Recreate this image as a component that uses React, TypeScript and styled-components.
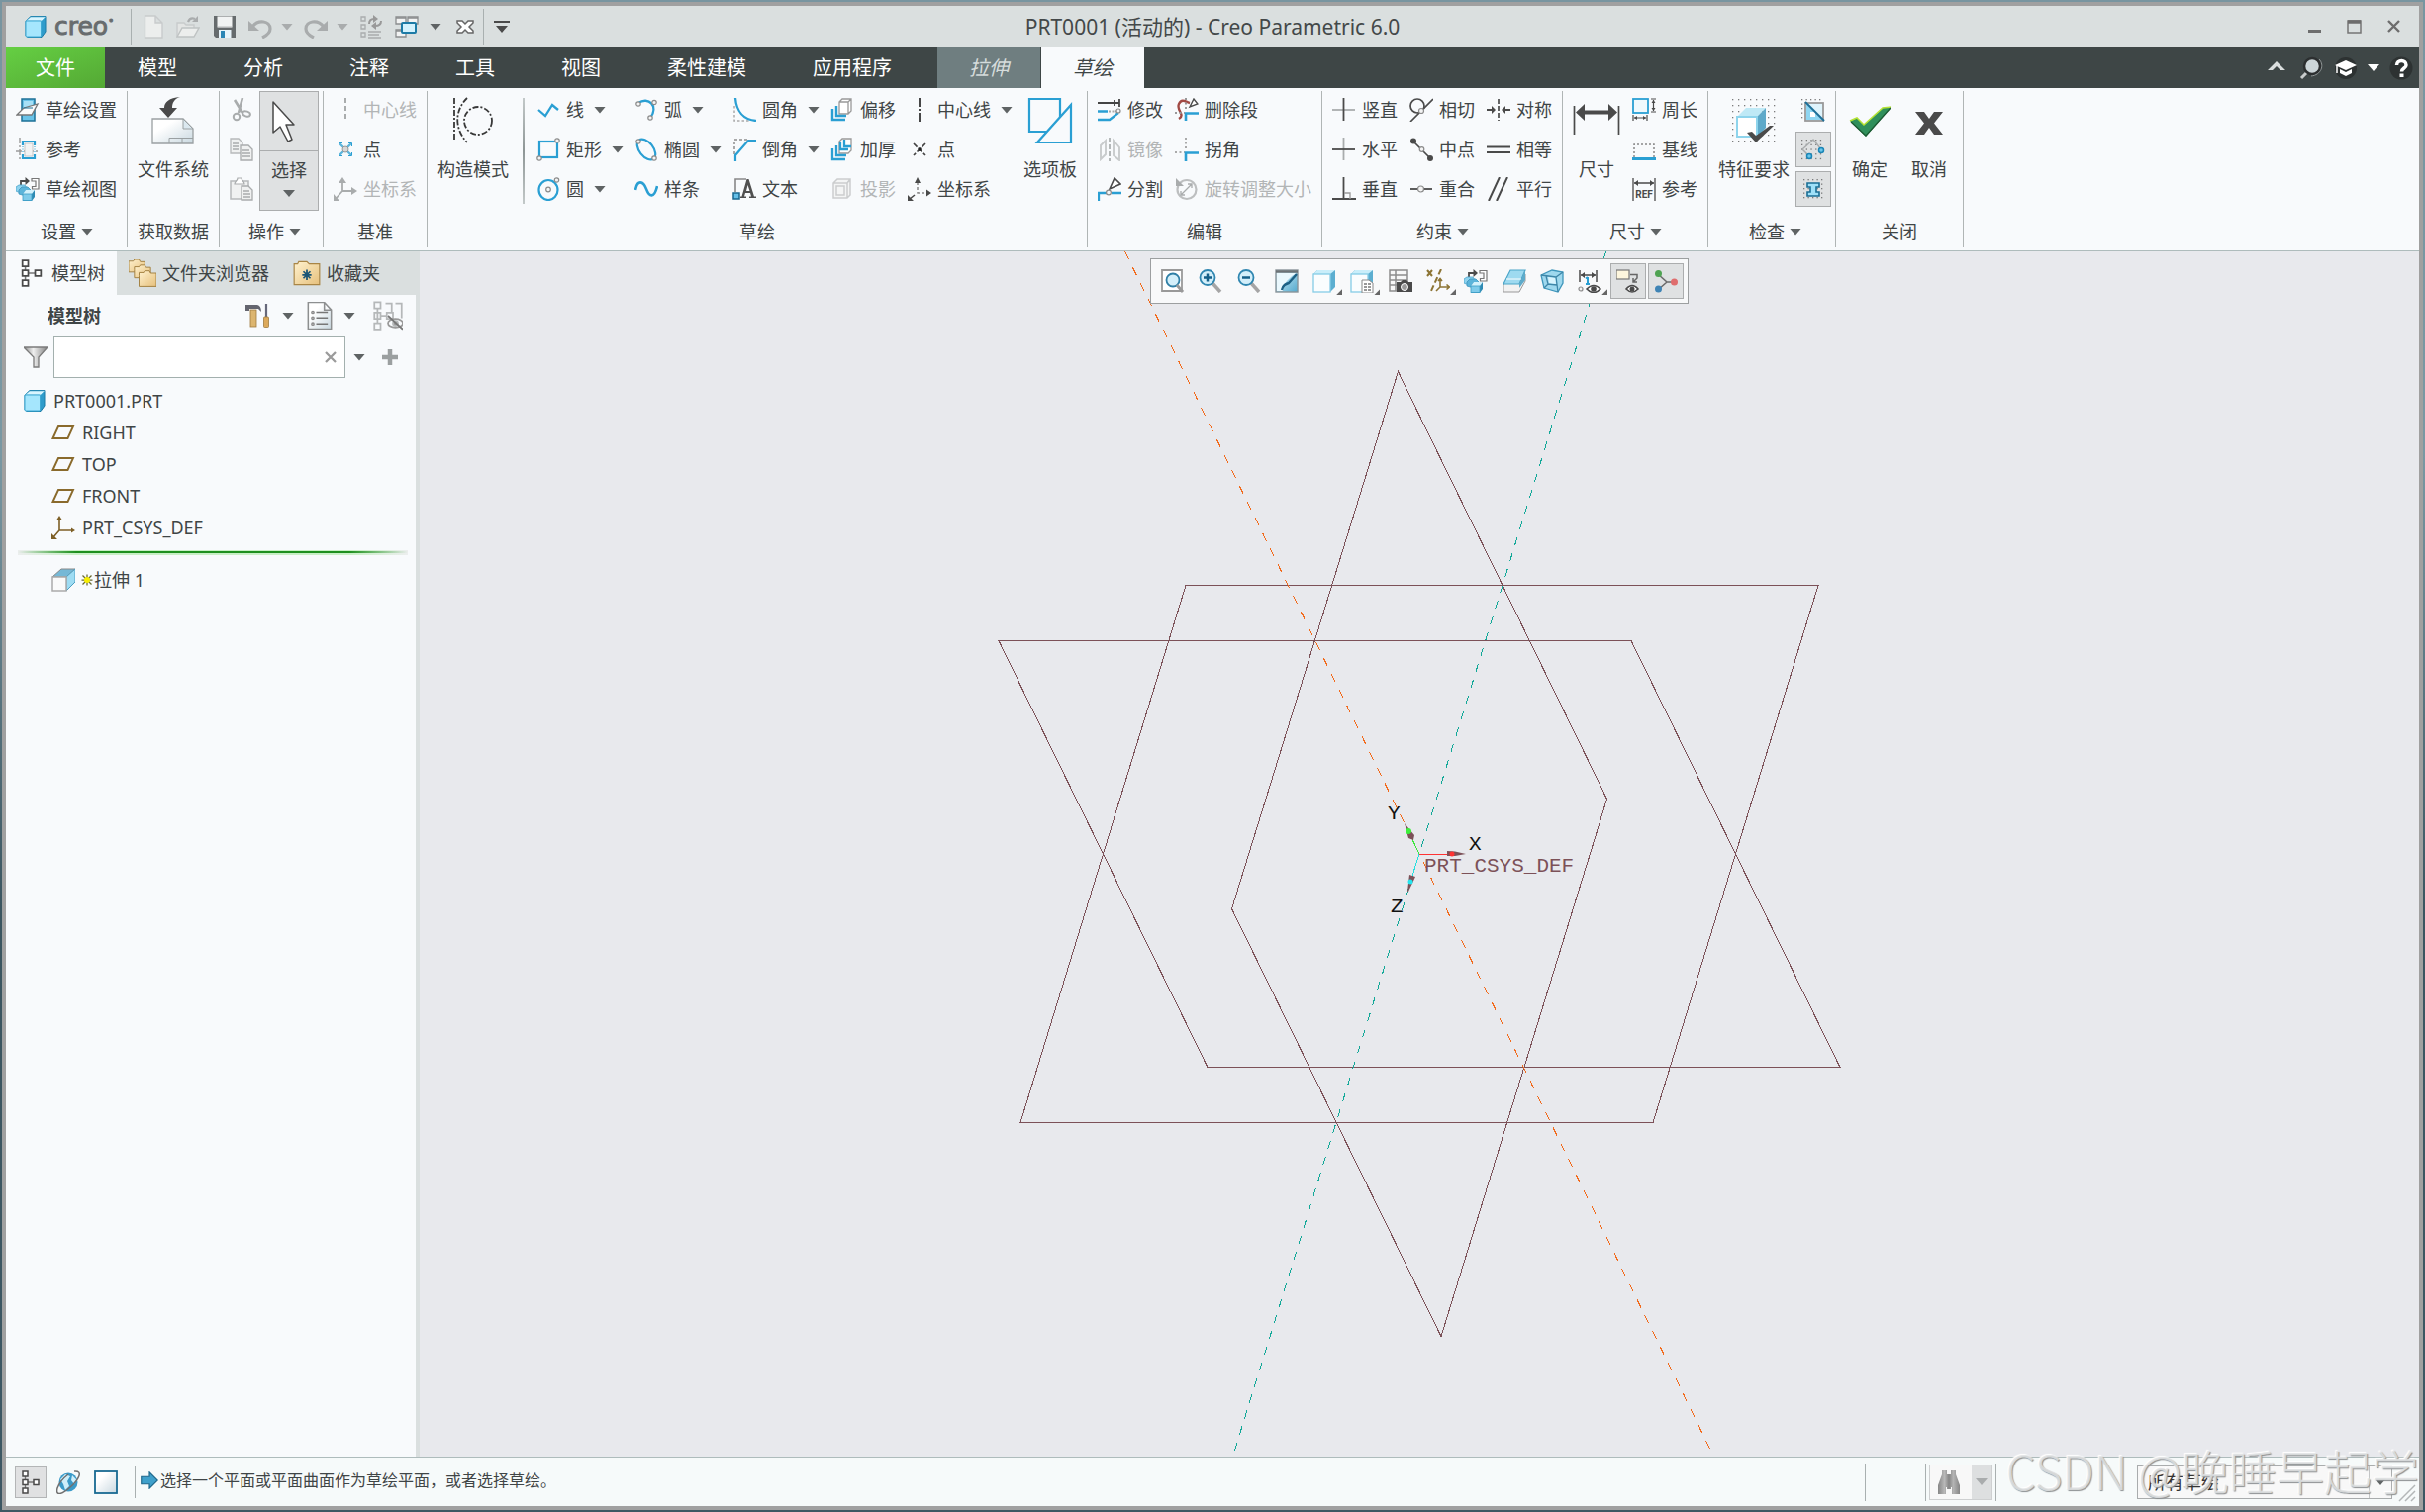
import React, { ReactNode } from 'react';
import styled, { createGlobalStyle, css } from 'styled-components';

const GlobalStyle = createGlobalStyle`
  *, *::before, *::after { box-sizing: border-box; }
  html, body, #root { height: 100%; }
  body {
    margin: 0;
    overflow: hidden;
    color: #3f4546;
    font-family: 'Noto Sans', 'Noto Sans CJK SC', sans-serif;
    font-size: 18px;
    line-height: 24px;
  }
  button, input, select { font: inherit; color: inherit; }
  svg { display: block; flex: none; }
`;

/* ---------- icons ---------- */

const B = '#2a9fd3';
const K = '#4a4a4a';
const G = '#a9acad';
const L = '#c8cbcc';

const node = (x: number, y: number, r = 2) => (
  <circle key={`${x}-${y}`} cx={x} cy={y} r={r} fill="#f4f4f4" stroke="#8b8b8b" strokeWidth="1.2" />
);

const dots = (x0: number, y0: number, nx: number, ny: number, step: number) => {
  const out: ReactNode[] = [];
  for (let i = 0; i < nx; i++)
    for (let j = 0; j < ny; j++)
      out.push(<rect key={`${i}.${j}`} x={x0 + i * step} y={y0 + j * step} width="1.3" height="1.3" fill="#7b7b7b" />);
  return out;
};

const viewBoxes: Record<string, number> = {
  fileSystem: 48, cursor: 48, construct: 48, palette: 48, dimension: 48, feature: 48, ok: 48, cancel: 48,
};

const partCube = (
  <>
    <path d="M2 6 L7 1.5 H22 V17 L18 22.5 H4 L2 21Z" fill="#2f9ccb" stroke="#1b7aa5" strokeWidth="1" />
    <path d="M2 6 L7 2 H22 L18 6Z" fill="#d9f5ff" stroke="#48a8cc" strokeWidth=".6" />
    <rect x="2" y="6" width="15.5" height="16" rx="1" fill="#a5e6fd" stroke="#3ea9d4" strokeWidth="1" />
  </>
);

const glyphs: Record<string, ReactNode> = {
  part: partCube,
  newDoc: <path d="M3.500 1 H14 L21 8 V23 H3.500Z M14 1 V8 H21" fill="#eceeed" stroke={L} strokeWidth="1.400" />,
  open: (
    <>
      <path d="M1 22 V8 H8 L10 10 H18 V13" fill="#e3e5e4" stroke={L} strokeWidth="1.400" />
      <path d="M1 22 L6 13 H23 L18 22Z" fill="#eceeed" stroke="#bfc3c3" strokeWidth="1.400" />
      <path d="M12 7 Q14 2 19 4" fill="none" stroke={G} strokeWidth="2.200" />
      <path d="M16 7 L22 7 L22 1Z" fill={G} />
    </>
  ),
  save: (
    <>
      <path d="M1 1 H23 V23 H3 L1 21Z" fill="#666b6d" />
      <rect x="4.500" y="1.500" width="15" height="11" fill="#f1f3f3" />
      <path d="M5 12 H19" stroke="#b5b8b9" />
      <rect x="6" y="15" width="12.500" height="8" fill="#e8f4fa" />
      <rect x="8" y="16" width="4" height="7" fill="#2c86b5" />
    </>
  ),
  undo: (
    <>
      <path d="M4 12 C10 4 22 6 22 14 C22 18 18 21 14 23" fill="none" stroke={G} strokeWidth="3.200" />
      <path d="M0 6 V16 H11Z" fill={G} />
    </>
  ),
  redo: (
    <>
      <path d="M20 12 C14 4 2 6 2 14 C2 18 6 21 10 23" fill="none" stroke={G} strokeWidth="3.200" />
      <path d="M24 6 V16 H13Z" fill={G} />
    </>
  ),
  regen: (
    <>
      <path d="M2 2 h4 v4 h-4z M2 10 h4 v4 h-4z M2 18 h4 v4 h-4z" fill="none" stroke={G} strokeWidth="1.300" />
      <path d="M9 17 H22 M9 20 H20 M9 23 H22" stroke={G} strokeWidth="1.300" />
      <path d="M10 9 C10 5 12 4 15 4 M22 6 C22 10 20 11 16 11" fill="none" stroke="#999" strokeWidth="2" />
      <path d="M14 0 L19 4 L14 8Z M17 7 L12 11 L17 15Z" fill="#999" />
    </>
  ),
  windows: (
    <>
      <path d="M1 2 H11 V9 H1Z M13 2 H23 V9 H13Z M1 15 H11 V22 H1Z" fill="#f2f3f3" stroke="#8a8d8e" strokeWidth="1.300" />
      <path d="M1 3 H11 M13 3 H23 M1 16 H11" stroke="#8a8d8e" strokeWidth="1.500" />
      <rect x="7" y="8" width="14" height="10" rx="1" fill="#d4f2fd" stroke="#1d7ba6" strokeWidth="2" />
    </>
  ),
  closeWin: (
    <path d="M4 6 H9 L12 9 L15 6 H20 V8 L16 12 L20 16 V18 H15 L12 15 L9 18 H4 V16 L8 12 L4 8Z" fill="#fff" stroke="#666" strokeWidth="1.500" />
  ),
  customize: <path d="M4 6 H20 V8 H4Z M6 11 H18 L12 18Z" fill={K} />,

  sketchSetup: (
    <>
      <rect x="6" y="1" width="13" height="22" fill="#6ac3e8" stroke="#1d7096" strokeWidth="1.500" />
      <rect x="8" y="3" width="9" height="8" fill="#a8e0f6" />
      <path d="M1 17 L8 10 L22 6 L16 17Z" fill="#fbfbfb" stroke="#777" strokeWidth="1.300" />
      <path d="M8 10 H17" stroke="#1d7096" />
    </>
  ),
  references: (
    <>
      <path d="M4 0 V24 M0 14 H24" stroke="#9a9a9a" strokeWidth="1.400" strokeDasharray="6 2 2 2" />
      <path d="M7 8 V4 H19 V8 M7 17 V21 H19 V17" fill="none" stroke={B} strokeWidth="2.200" />
      <path d="M9 6 H17 V19 H9Z" fill="#f3f3f3" stroke="#bbb" strokeWidth=".8" />
      <path d="M7 9 V16 M19 9 V16" stroke={B} strokeWidth="1" strokeDasharray="1 1.500" />
    </>
  ),
  sketchView: (
    <>
      <path d="M5 8 V4 H12" fill="none" stroke={K} strokeWidth="1.800" />
      <path d="M9.500 0 L14 4 L9.500 8Z" fill={K} />
      <path d="M16 1.500 H23 V12 H16.500 V9.500 H20 V4 H16Z" fill="#fff" stroke="#777" strokeWidth="1.200" />
      <path d="M0 10 L3 8 H9 L12 12 L7 17 L0 14Z" fill="#8ed2ee" stroke="#4aa5cb" strokeWidth=".8" />
      <path d="M3 13 L6 10 H12 L16 14 L10 19 L3 17Z" fill="#5cb4da" stroke="#3a94bc" strokeWidth=".8" />
      <path d="M7 17 L10 13 H19 V20 L16 24 H7Z" fill="#2e8ab3" />
      <path d="M7 17 L10 13 H19 L16 17Z" fill="#d2f1fc" />
      <rect x="7" y="17" width="9" height="6.500" fill="#7fcbea" stroke="#3c9dc6" strokeWidth=".8" />
    </>
  ),
  fileSystem: (
    <>
      <path d="M3 22 H34 L44 32 V47 H3Z" fill="url(#paper)" stroke="#9aa0a2" strokeWidth="1.300" />
      <path d="M34 22 V32 H44Z" fill="#dbe8ef" stroke="#9aa0a2" />
      <path d="M20 41.500 H44 M20 41.500 V47 M33 41.500 V47" stroke="#9aa0a2" fill="none" />
      <path d="M31 0 C20 1 15 5 15 11 H10 L19 21 L28 11 H23 C23 6 25 2 31 0Z" fill={K} />
    </>
  ),
  cut: (
    <>
      <path d="M5 2 L13 15 M13 0 L9 15" stroke={G} strokeWidth="2.600" />
      <circle cx="7" cy="19" r="3.200" fill="none" stroke={G} strokeWidth="2" />
      <ellipse cx="17" cy="16" rx="4" ry="2.500" transform="rotate(20 17 16)" fill="none" stroke={G} strokeWidth="2" />
    </>
  ),
  copy: (
    <>
      <path d="M1 1 H9 L13 5 V16 H1Z" fill="#f0f1f1" stroke="#b6b9ba" strokeWidth="1.300" />
      <path d="M3 6 H9 M3 9 H9 M3 12 H9" stroke={G} strokeWidth="1.300" />
      <path d="M11 8 H19 L23 12 V23 H11Z" fill="#f0f1f1" stroke={G} strokeWidth="1.300" />
      <path d="M13 13 H20 M13 16 H21 M13 19 H21" stroke={G} strokeWidth="1.300" />
    </>
  ),
  paste: (
    <>
      <path d="M1 4 H19 V22 H1Z" fill="#f0f1f1" stroke="#b6b9ba" strokeWidth="1.500" />
      <path d="M5 7 C5 4 8 4 8 1 H12 C12 4 15 4 15 7Z" fill="#fff" stroke={G} strokeWidth="1.200" />
      <path d="M12 9 H19 L23 13 V23 H12Z" fill="#f0f1f1" stroke={G} strokeWidth="1.300" />
      <path d="M14 14 H20 M14 17 H21 M14 20 H21" stroke={G} strokeWidth="1.300" />
    </>
  ),
  cursor: (
    <path d="M8 5 V36 L15 30 L23 45 L27 43 L21 28 H29Z" fill="#fff" stroke={K} strokeWidth="1.500" strokeLinejoin="round" />
  ),
  centerGray: <path d="M12 0 V24" stroke={G} strokeWidth="2" strokeDasharray="5 3" />,
  pointBlue: (
    <>
      <path d="M6 6 L18 18 M18 6 L6 18" stroke="#5db5dc" strokeWidth="2.400" />
      <path d="M5.500 9 V5.500 H9 M15 5.500 H18.500 V9 M18.500 15 V18.500 H15 M9 18.500 H5.500 V15" fill="none" stroke={B} strokeWidth="1" />
      <circle cx="12" cy="12" r="3" fill="#d7d7d7" stroke="#999" />
    </>
  ),
  csysGray: (
    <>
      <path d="M9 2 V14 H21 M9 14 L2 22" fill="none" stroke={G} strokeWidth="1.800" />
      <path d="M9 0 L5 6 H13Z M24 14 L18 10 V18Z M0 24 V17 L6 24Z" fill={G} />
    </>
  ),
  construct: (
    <g fill="none" stroke="#383838" strokeWidth="1.800" strokeDasharray="6 2 2 2">
      <path d="M5 1 V46" />
      <path d="M18 1 C5 14 5 32 18 46" />
      <circle cx="29" cy="24" r="14" />
    </g>
  ),

  line: <path d="M2 12 L9 18 L16 7 L22 12" fill="none" stroke={B} strokeWidth="2.300" />,
  rect: <><rect x="3" y="4" width="18" height="16" fill="none" stroke={B} strokeWidth="2.200" />{node(21, 3, 2.2)}{node(3, 21, 2.2)}</>,
  circle: <><ellipse cx="12" cy="13" rx="9.500" ry="10" fill="none" stroke={B} strokeWidth="2.200" />{node(12, 12.5, 2.3)}{node(20.5, 3, 2.2)}</>,
  arc: <><path d="M4 5 C14 -2 25 8 16 20" fill="none" stroke={B} strokeWidth="2.400" />{node(4, 6, 2.2)}{node(20, 4.5, 2.2)}{node(16, 20, 2.2)}</>,
  ellipse: <><ellipse cx="12" cy="12" rx="12" ry="7" transform="rotate(52 12 12)" fill="none" stroke={B} strokeWidth="2.200" />{node(4, 4, 2.2)}{node(20, 21, 2.2)}</>,
  spline: <path d="M1 13 C3 2 9 4 12 12 S20 22 23 9" fill="none" stroke={B} strokeWidth="2.600" />,
  fillet: <><path d="M2 8 V23 H17" fill="none" stroke="#aaa" strokeWidth="1.500" strokeDasharray="2.500 2" /><path d="M3 0 C4 13 11 22 24 23" fill="none" stroke={B} strokeWidth="2.300" /></>,
  chamfer: <><path d="M2 17 V2 H16" fill="none" stroke="#8d8d8d" strokeWidth="1.500" strokeDasharray="3 2" /><path d="M3 24 V18 L16 3 H24" fill="none" stroke={B} strokeWidth="2.200" /></>,
  text: (
    <>
      <path d="M3 15 V2 H14" fill="none" stroke="#888" strokeWidth="1.600" />
      <path d="M8 21 H14 V19.500 H12 L13 16 H18 L19 19.500 H17 V21 H24 V19.500 H22 L16.500 2 H14.500 L9.500 19.500 H8Z M14 14 L15.500 8 L17.500 14Z" fill="#505050" fillRule="evenodd" />
      <rect x="1" y="16" width="6" height="6" fill="#64bfe8" stroke="#17678f" strokeWidth="1.500" />
    </>
  ),
  offset: <><path d="M9 4 L12 1 H21 V13 L18 16 H9Z M9 4 H18 V16 M18 4 L21 1" fill="#fff" stroke="#999" strokeWidth="1.300" /><path d="M6 8 V18 H16 M2 11 V22 H15" fill="none" stroke={B} strokeWidth="2.400" /></>,
  thicken: <><path d="M9 4 L12 1 H21 V13 L18 16 H9Z" fill="#fff" stroke="#999" strokeWidth="1.300" /><path d="M6 8 V18 H16 M2 11 V22 H15 M14 2 V9 H21 M10 5 V12 H18" fill="none" stroke={B} strokeWidth="2.300" /></>,
  project: <path d="M3 6 L7 2 H20 V18 L17 21 H3Z M3 6 H17 V21 M17 6 L20 2 M6 9 H14 V18 H6Z" fill="#f4f5f5" stroke="#cbcdce" strokeWidth="1.500" />,
  center: <path d="M12 0 V24" stroke="#333" strokeWidth="1.800" strokeDasharray="9 2 2 2" />,
  point: <><path d="M6 6 L18 18 M18 6 L6 18" stroke="#444" strokeWidth="1.700" strokeDasharray="5 2" /><rect x="10.500" y="10.500" width="3" height="3" fill="#222" /></>,
  csys: (
    <>
      <path d="M10 5 V16 H19" fill="none" stroke="#888" strokeWidth="1.500" strokeDasharray="3 2" />
      <path d="M10 0 L7 6 H13Z M24 16 L19 12.500 V19.500Z M0 24 V18 L6 24Z" fill={K} />
      <path d="M2 22 L7 18" stroke={K} strokeWidth="1.600" />
    </>
  ),
  palette: (
    <g fill="none" stroke={B} strokeWidth="2.200">
      <path d="M21 35 H3 V2 H34 V20" />
      <path d="M11 46 H45 V8Z" fill="#f8fafc" />
    </g>
  ),

  modify: <><path d="M0 5 H22 M22 1 V9 M17 2 V8" stroke="#444" strokeWidth="1.800" /><path d="M0 13.500 H10 M0 22 H12 L21 15" fill="none" stroke={B} strokeWidth="2.300" /><path d="M11 13.500 H19" stroke="#aaa" strokeWidth="1.800" strokeDasharray="2 1.500" />{node(21, 13, 2)}</>,
  mirror: (
    <>
      <path d="M3 8 L8 3 V17 L3 22Z M16 3 L22 10 V23 L16 18Z" fill="none" stroke={L} strokeWidth="1.900" />
      <path d="M12 0 V24" stroke={G} strokeWidth="1.700" strokeDasharray="5 2" />
    </>
  ),
  split: <><path d="M1 24 V16 H9 M14 16 H24" fill="none" stroke={B} strokeWidth="2.300" /><path d="M12 12 L17 1 L23 7Z" fill="#fff" stroke={K} strokeWidth="1.600" />{node(11, 15.5, 2.4)}</>,
  deleteSeg: (
    <>
      <path d="M4 21 C11 17 1 12 4 6 C7 0 11 4 15 5" fill="none" stroke="#a14a44" strokeWidth="2.400" />
      <path d="M11 23 V15.500 H24" fill="none" stroke={B} strokeWidth="2.600" />
      <path d="M15 9 L19 1 L23 6Z" fill="#fff" stroke={K} strokeWidth="1.400" />
      <path d="M0 15 H10 M11 0 V13" stroke="#999" strokeWidth="2" strokeDasharray="2 2.500" />
    </>
  ),
  corner: <><path d="M0 15 H10 M11 0 V13" stroke="#aaa" strokeWidth="2" strokeDasharray="2 2.500" /><path d="M11 24 V15.500 H24" fill="none" stroke={B} strokeWidth="2.600" /></>,
  rotate: <><circle cx="12" cy="12.500" r="9.500" fill="none" stroke="#bdbfc0" strokeWidth="2.200" /><path d="M6 18 L17 7 M13 7 H17 V11 M6 14 V18 H10" fill="none" stroke={G} strokeWidth="1.300" /><path d="M1 1 V9 H9Z" fill={G} /></>,

  vertical: <><path d="M0 12 H23" stroke={G} strokeWidth="1.800" /><path d="M11.500 0 V23" stroke={K} strokeWidth="1.800" /></>,
  horizontal: <><path d="M11.500 0 V23" stroke={G} strokeWidth="1.800" /><path d="M0 12 H23" stroke={K} strokeWidth="1.800" /></>,
  perpendicular: <><path d="M11.500 0 V22 M0 22 H24" stroke={K} strokeWidth="1.800" /><path d="M12 16 H18 V22" fill="none" stroke="#999" strokeWidth="1.300" /></>,
  tangent: <><circle cx="8" cy="8" r="7" fill="none" stroke={K} strokeWidth="1.700" /><path d="M1 24 L24 1" stroke={K} strokeWidth="1.700" />{node(12, 13, 2.5)}</>,
  midpoint: <><path d="M4 4 L21 21" stroke={K} strokeWidth="1.700" /><circle cx="4" cy="3.500" r="3" fill={K} /><circle cx="21" cy="21" r="3" fill={K} />{node(12.5, 12, 2.3)}</>,
  coincident: <><path d="M1 12 H23" stroke={K} strokeWidth="1.800" />{node(11.5, 12, 3)}</>,
  symmetric: <><path d="M0 12 H6 M18 12 H24" stroke={K} strokeWidth="2" /><path d="M5 8 L9 12 L5 16Z M19 8 L15 12 L19 16Z" fill={K} /><path d="M12 1 V23" stroke={K} strokeWidth="1.700" strokeDasharray="5 2" /></>,
  equal: <path d="M0 9.500 H24 M0 15 H24" stroke={K} strokeWidth="2" />,
  parallel: <path d="M2 24 L13 0 M10 24 L21 0" stroke={K} strokeWidth="2" />,

  dimension: <><path d="M1.500 9 V38 M46.500 9 V38" stroke={K} strokeWidth="1.700" /><path d="M3 15.500 L12 7 V13.500 H36 V7 L45 15.500 L36 24 V17.500 H12 V24Z" fill={K} /></>,
  perimeter: <><rect x="1" y="1" width="15" height="14" fill="#f0f9fd" stroke={B} strokeWidth="1.800" /><path d="M1 17 V23 M15 17 V23 M2 20 H14 M19 1 H24 M19 14 H24 M21.500 2 V13" stroke={K} strokeWidth="1.200" /><path d="M2 20 l3 -2 v4z M14 20 l-3 -2 v4z M21.500 2 l-2 3 h4z M21.500 13 l-2 -3 h4z" fill={K} /></>,
  baseline: <><path d="M2 20 V7 H22 V20" fill="none" stroke="#888" strokeWidth="1.500" strokeDasharray="2 2" /><path d="M0 21.500 H24" stroke={B} strokeWidth="3" /></>,
  refDim: (
    <>
      <path d="M1 1 V24 M23 1 V24 M2 6 H22" stroke={K} strokeWidth="1.300" />
      <path d="M2 6 L6 3 V9Z M22 6 L18 3 V9Z" fill={K} />
      <text x="12" y="21" textAnchor="middle" fontFamily="Roboto, sans-serif" fontWeight="700" fontSize="10" fill={K}>REF</text>
    </>
  ),
  feature: (
    <>
      {dots(2, 2, 8, 8, 6)}
      <path d="M7 20 L16 11 H36 L27 20Z" fill="#bfe9f6" />
      <path d="M27 20 L36 11 V31 L27 41Z" fill="#5ea9c9" />
      <rect x="7" y="20" width="20" height="20" fill="#fff" stroke="#8ed4ec" strokeWidth="2" />
      <path d="M17 36 L26 46 L44 29 L40 29 L26 39 L22 35Z" fill={K} />
    </>
  ),
  shade: <>{dots(0, 1, 5, 5, 4.5)}<rect x="4" y="5" width="18" height="18" fill="#dff4fc" stroke="#999" strokeWidth="1.800" /><path d="M5 6 V22 H21Z" fill="#8fd6f2" /><rect x="9" y="14" width="5" height="5" fill="#fff" /><path d="M4 4 L23 23" stroke="#1d6f97" strokeWidth="2" /></>,
  openEnds: <>{dots(0, 2, 5, 5, 4.7)}<path d="M8 19 L1 12 L12 2 L20 12" fill="none" stroke={G} strokeWidth="1.500" /><circle cx="8" cy="19" r="2.500" fill="#6cc6ea" stroke="#1b86b7" strokeWidth="1.500" /><circle cx="20" cy="13" r="2.500" fill="#6cc6ea" stroke="#1b86b7" strokeWidth="1.500" /></>,
  overlap: <>{dots(2, 2, 5, 5, 4.5)}<path d="M6 6 H18 V10 H15 V15 H18 V19 H6 V15 H9 V10 H6Z" fill="#9fe0f8" stroke="#1a6e95" strokeWidth="1.600" /></>,
  ok: <><path d="M4 24 L11 21 L18 28 L37 11 L46 10 L20 40Z" fill="#2f8f5b" /><path d="M4 24 L11 21 L18 28 L37 11 L46 10" fill="none" stroke="#b4e234" strokeWidth="1.600" /><path d="M5 25 L20 39 L45 11" fill="none" stroke="#1d5a33" strokeWidth="1.300" /></>,
  cancel: <path d="M10 15 H19 L24 22 L29 15 H38 L29 26.500 L38 38 H29 L24 31 L19 38 H10 L19 26.500Z" fill={K} />,

  refit: <><path d="M1 1 H21 V22 H1Z" fill="#fff" stroke="#999" strokeWidth="1.800" /><circle cx="12" cy="11" r="6.500" fill="#d3effa" stroke="#2f7fa6" strokeWidth="1.800" /><path d="M16 16 L22 23" stroke="#999" strokeWidth="3" /></>,
  zoomIn: <><path d="M14 14 L22 23" stroke="#a5a5a5" strokeWidth="3.500" /><circle cx="9" cy="8.500" r="7.500" fill="#d3effa" stroke="#2f86b0" strokeWidth="1.800" /><path d="M9 4.500 V12.500 M5 8.500 H13" stroke="#135f88" strokeWidth="2.500" /></>,
  zoomOut: <><path d="M14 14 L22 23" stroke="#a5a5a5" strokeWidth="3.500" /><circle cx="9" cy="8.500" r="7.500" fill="#d3effa" stroke="#2f86b0" strokeWidth="1.800" /><path d="M5 8.500 H13" stroke="#135f88" strokeWidth="2.500" /></>,
  repaint: <><rect x="1" y="1" width="22" height="22" fill="url(#pane)" stroke="#8a9499" strokeWidth="1.400" /><path d="M1 2.500 H23" stroke="#6d7376" strokeWidth="2.500" /><path d="M2 4 H22 Q10 10 8 22 H2Z" fill="#eaf8fd" /><path d="M7 21 C8 16 11 15 14 14 L22 5" fill="none" stroke="#1c6084" strokeWidth="2.400" /></>,
  display: <><path d="M1 5 L5 1 H23 V18 L18 23 H1Z" fill="#5caed0" /><path d="M1 5 L5 1 H23 L18 5Z" fill="#c9eefa" /><rect x="1" y="5" width="17" height="18" fill="#fafdfe" stroke="#86cde6" strokeWidth="1.300" /></>,
  saved: <><path d="M1 5 L5 1 H23 V18 H1Z" fill="#5caed0" /><path d="M1 5 L5 1 H23 L18 5Z" fill="#c9eefa" /><rect x="1" y="5" width="17" height="18" fill="#fafdfe" stroke="#86cde6" strokeWidth="1.300" /><path d="M12 11 H19 L23 14 V24 H12Z" fill="#fff" stroke="#888" /><path d="M14 15 H17 M18 15 H21 M14 18 H17 M18 18 H21 M14 21 H17 M18 21 H21" stroke="#777" strokeWidth="1.400" /></>,
  viewMgr: <><path d="M1 1 H19 V22 H1Z M1 6 H19 M1 11 H19 M1 16 H19 M7 1 V22" fill="#f7f7f7" stroke="#8d8d8d" strokeWidth="1.500" /><path d="M8 13 H12 L14 11 H18 L20 13 H24 V23 H8Z" fill={K} /><circle cx="16" cy="18" r="3.500" fill="#999" stroke="#fff" /></>,
  datum: <g fill="none" stroke="#8c7434" strokeWidth="2"><path d="M1 1 L6 7 M6 1 L1 7" /><path d="M15 0 L4 24" strokeDasharray="6 3" /><path d="M14 10 V18 H23 M14 18 L10 22 M12 12 L14 9.500 L16 12 M20.500 15.500 L23.500 18 L20.500 20.500" strokeWidth="1.600" /></g>,
  section: <><path d="M1 16 L7 5 H23 V12 L17 23 H1Z" fill="#f2f2f2" stroke="#999" /><path d="M1 15 L8 1 H23 L17 15Z" fill="#9edaf0" stroke="#4aa5c8" strokeWidth="1.200" /><path d="M17 15 L23 1 V11 L17 19Z" fill="#5eabca" /><path d="M4 10 H19" stroke="#fff" /></>,
  perspective: <><path d="M1 6 L12 1 L23 3 V14 L18 23 L4 19Z" fill="#9ed8ee" stroke="#3e96bb" strokeWidth="1.300" /><path d="M1 6 L16 8 L23 3 M16 8 L18 23 M6 7 L8 15 L4 19 M8 15 L17 16" fill="none" stroke="#3e86a8" strokeWidth="1.300" /><path d="M8 8 L15 9 L16 15 L9 14Z" fill="#d9f4fd" /></>,
  annot: <><path d="M2 1 V13 M19 1 V13 M3 6 H18" stroke={K} strokeWidth="1.500" /><path d="M3 6 L7 3 V9Z M18 6 L14 3 V9Z" fill={K} /><path d="M10 8 V15 M8 9.500 L10 8 M8 15 H12" fill="none" stroke={B} strokeWidth="2" />{node(3, 20, 2)}<path d="M9 20 Q16 13 23 20 Q16 27 9 20Z" fill="#fff" stroke={K} strokeWidth="1.600" /><circle cx="16" cy="20" r="2.800" fill={K} /></>,
  annotDisplay: <><rect x="0" y="1" width="13" height="9" fill="#fdf6dd" stroke="#777" strokeWidth="1.200" /><path d="M14 5.500 H21 V9 L17 13 M17 9 V13 H21" fill="none" stroke="#666" strokeWidth="1.500" /><path d="M10 20 Q16 13 22 20 Q16 26 10 20Z" fill="#fff" stroke={K} strokeWidth="1.600" /><circle cx="16" cy="20" r="2.500" fill={K} /></>,
  spin: <><path d="M4 5 L13 13 H22 M13 13 L5 20" fill="none" stroke="#6b6b6b" strokeWidth="1.600" /><circle cx="4.500" cy="4.500" r="3.500" fill="#4fa352" /><circle cx="20.500" cy="13" r="3.500" fill="#df6d6d" /><circle cx="4.500" cy="20" r="3.500" fill="#3f84b5" /></>,

  tree: <><path d="M6.500 6 V18 M9 12 H15" stroke="#777" strokeWidth="1.300" /><path d="M4 1 H9 V6 H4Z M4 9.500 H9 V14.500 H4Z M4 18 H9 V23 H4Z M15 9.500 H20 V14.500 H15Z" fill="#fff" stroke={K} strokeWidth="1.500" /></>,
  folders: (
    <g stroke="#9f7d3c" strokeWidth=".8" fill="url(#folder)">
      <path d="M0 4 V1.500 H4 L5 0 H9 L10 2 H14 V11 H0Z" />
      <path d="M5 9 V6.500 H9 L10 5 H14 L15 7 H19 V16 H5Z" />
      <path d="M9 14 V11.500 H13 L14 10 H18 L19 12 H24 V23.500 H9Z" />
    </g>
  ),
  favorites: <><path d="M1 22 V4 H4 L5 2 H12 L14 4 H23 V22Z" fill="url(#folder)" stroke="#a98545" /><path d="M12 9 V18 M8 13.500 H16 M9 10.500 L15 16.500 M15 10.500 L9 16.500" stroke="#1b5676" strokeWidth="1.500" /></>,
  tools: <><path d="M0 1 H12 Q16 2 16 8 L13 5 H4 V7 H0Z" fill="#64656f" /><rect x="5" y="6" width="6" height="17" fill="#dcb56f" stroke="#9e7b3f" strokeWidth=".8" /><path d="M21 0 V14" stroke="#66687a" strokeWidth="2.200" /><rect x="18.500" y="13" width="5" height="10.500" rx="1" fill="#dca95b" stroke="#9e7b3f" strokeWidth=".8" /></>,
  settings: <><path d="M2 0.500 H16 L22 7 V23.500 H2Z M16 .5 V7 H22" fill="url(#paper)" stroke="#8d8f90" strokeWidth="1.300" /><path d="M9 9 H19 M9 14 H19 M9 19 H19" stroke="#777" strokeWidth="1.300" />{node(6, 9, 1)}{node(6, 14, 1)}{node(6, 19, 1)}</>,
  hideTree: <g fill="none" stroke="#b5b8b9" strokeWidth="1.400"><path d="M1 1 H6 V6 H1Z M1 9.500 H6 V14.500 H1Z M1 18 H6 V23 H1Z M11 9.500 H16 V14.500 H11Z M3.500 6 V18 M6 12 H11 M10 2 H15 V9 M18 2 H23 V14" /><ellipse cx="18" cy="18" rx="6" ry="3.500" stroke="#999" /><circle cx="18" cy="18" r="2" fill="#999" /><path d="M12 12 L24 23" stroke="#777" /></g>,
  filter: <path d="M0 2 H24 L15 12 V22 H10 V12Z" fill="url(#funnel)" stroke="#7b7b7b" strokeWidth="1.300" />,
  clear: <path d="M7 7 L17 17 M17 7 L7 17" stroke="#9b9b9b" strokeWidth="2.300" />,
  plus: <path d="M12 4 V20 M4 12 H20" stroke="#9b9fa0" strokeWidth="4.500" />,
  plane: <path d="M1.500 18 L7 6 H22 L16.500 18Z" fill="none" stroke="#8a6a2c" strokeWidth="1.900" />,
  csysTree: <><path d="M8 2 V15 H22 M8 15 L2 22" fill="none" stroke="#7d5f26" strokeWidth="1.600" /><path d="M8 0 L5.500 4 H10.500Z M24 15 L20 12.500 V17.500Z M0 24 V18 L6 24Z" fill="#7d5f26" /></>,
  extrude: <><path d="M1 9 L10 1 H24 L15 9Z" fill="#75b8d6" stroke="#888" /><path d="M15 9 L24 1 V14 L15 23Z" fill="#9edcf3" stroke="#4d9fc2" /><rect x="1" y="9" width="14" height="14" fill="#fafafa" stroke="#aaa" strokeWidth="1.500" /></>,
  spark: <><path d="M12 1 V23 M1 12 H23 M3 3 L21 21 M21 3 L3 21" stroke="#68682c" strokeWidth="2.500" /><circle cx="12" cy="12" r="6" fill="#f7ee00" /></>,

  globe: <><circle cx="12" cy="12" r="9.500" fill="#3a9ac8" /><path d="M4 9 L9 4 L14 6 L11 11 L13 16 L9 20 L7 14Z M16 5 L21 10 L18 14 L15 10Z" fill="#cdeefa" /><path d="M18 1 C28 0 22 10 14 17 C5 25 -1 26 1 18 C3 12 8 7 12 4" fill="none" stroke="#707070" strokeWidth="1.500" /></>,
  blank: <rect x="1" y="1" width="22" height="22" fill="url(#paper)" stroke="#196a92" strokeWidth="1.800" />,
  arrowMsg: <path d="M1 7 H12 V1 L23 12 L12 23 V17 H1Z" fill="#3fa0cb" stroke="#1c668b" strokeWidth="1.500" />,
  find: <path d="M5 0 H10 V4 H14 V0 H19 V4 L23 15 V24 H15 V17 H14 V19 H10 V17 H9 V24 H1 V15 L5 4Z" fill="url(#binocular)" />,

  minimize: <path d="M5 16.500 H18" stroke="#6d6d6d" strokeWidth="3" />,
  maximize: <><rect x="5" y="6" width="13" height="12" fill="none" stroke="#757575" strokeWidth="1.500" /><path d="M5 7 H18" stroke="#6d6d6d" strokeWidth="3.500" /></>,
  close: <path d="M6 6 L17 17 M17 6 L6 17" stroke="#6d6d6d" strokeWidth="2.400" />,
  chevron: <path d="M3 14 L12 5 L21 14 L16 14 L12 10 L8 14Z" fill="#dadede" />,
  search: <><path d="M7 17 L2 22" stroke="#c9cccc" strokeWidth="3" /><circle cx="13" cy="10" r="8" fill="#ccd5d8" stroke="#2c2f30" strokeWidth="2.500" /><path d="M20 3 C26 9 22 19 12 20" fill="none" stroke="#8f9595" /></>,
  learn: <><circle cx="12" cy="12" r="11" fill="#2d3232" /><path d="M1 9 L12 4 L23 9 L12 14Z M6 13 L12 16 L18 13 V17 L12 20 L6 17Z" fill="#fff" /><path d="M3 9 V17" stroke="#fff" strokeWidth="1.500" /></>,
  help: <><circle cx="12" cy="12" r="11.500" fill="#2d3232" /><path d="M7.500 9 C7.500 3 17 3 17 9 C17 12 12.500 12 12.500 15.500" fill="none" stroke="#fff" strokeWidth="3.500" /><rect x="10.500" y="17.500" width="4" height="3.500" fill="#fff" /></>,
};

const Icon = ({ name, size = 24 }: { name: string; size?: number }) => {
  const v = viewBoxes[name] ?? 24;
  return (
    <svg width={size} height={size} viewBox={`0 0 ${v} ${v}`} aria-hidden="true">
      {glyphs[name]}
    </svg>
  );
};

const Caret = styled.span<{ $color?: string; $gap?: number }>`
  display: inline-block;
  width: 12px;
  height: 7px;
  flex: none;
  margin: 0 -1px 0 ${(p) => (p.$gap ?? 0) - 1}px;
  background: ${(p) => p.$color ?? '#5f6364'};
  clip-path: polygon(0 0, 100% 0, 50% 100%);
`;

/* ---------- window frame ---------- */

const Desktop = styled.div`
  height: 100%;
  padding: 2px;
  background: linear-gradient(#7895a0, #7a98a3 30%, #3b5560 60%, #3d5763);
`;

const Window = styled.div`
  height: 100%;
  display: flex;
  flex-direction: column;
  border: 4px solid #a0a0a0;
  background: #f8fafc;
`;

const TitleBar = styled.header`
  display: grid;
  grid-template-columns: 1fr auto 1fr;
  align-items: center;
  height: 42px;
  flex: none;
  background: #dadfdf;
`;

const QuickAccess = styled.div`
  display: flex;
  align-items: center;
  padding-left: 18px;
`;

const Brand = styled.span`
  display: flex;
  align-items: center;
  gap: 7px;
  width: 108px;
  color: #686c6e;
  font: 500 25px/32px 'DejaVu Sans', sans-serif;
  -webkit-text-stroke: 1px #686c6e;
  sup { font-size: 10px; line-height: 12px; align-self: flex-start; margin: 4px 0 0 -7px; }
`;

const Rule = styled.span<{ $height: number; $before?: number }>`
  width: 1px;
  height: ${(p) => p.$height}px;
  margin-left: ${(p) => p.$before ?? 0}px;
  flex: none;
  background: #a9b0b0;
`;

const PlainButton = styled.button`
  display: inline-flex;
  align-items: center;
  justify-content: center;
  padding: 0;
  border: 0;
  background: none;
`;

const QuickButton = styled(PlainButton)<{ $gap?: number }>`
  height: 32px;
  margin-left: ${(p) => p.$gap ?? 11}px;
`;

const WindowTitle = styled.h1`
  margin: 0;
  font-size: 21px;
  line-height: 28px;
  font-weight: 400;
  color: #434849;
`;

const WindowControls = styled.div`
  display: flex;
  justify-content: flex-end;
  gap: 16px;
  padding-right: 13px;
`;

const TabBar = styled.nav`
  display: flex;
  height: 41px;
  flex: none;
  background: #3e4646;
`;

const Tab = styled.button<{ $kind?: 'file' | 'context' | 'active' }>`
  height: 41px;
  padding: 0 33px;
  margin-right: 1px;
  border: 0;
  background: none;
  color: #fff;
  font-size: 20px;
  ${(p) => p.$kind === 'file' && css`
    padding: 0 30px;
    margin-right: 0;
    background: linear-gradient(160deg, #65cf43, #54a834);
  `}
  ${(p) => p.$kind === 'context' && css`
    padding: 0 32px;
    margin-left: 12px;
    background: #6f7e80;
    color: #d6dcdc;
    font-style: italic;
  `}
  ${(p) => p.$kind === 'active' && css`
    padding: 0 32px;
    background: #f8fafc;
    color: #3e4646;
    font-style: italic;
  `}
`;

const TabTools = styled.div`
  display: flex;
  align-items: center;
  gap: 11px;
  margin-left: auto;
  padding-right: 6px;
`;

/* ---------- ribbon ---------- */

const Ribbon = styled.section`
  display: flex;
  flex: none;
  padding: 3px 0;
  border-bottom: 1px solid #aebcbc;
  background: #f8fafc;
`;

const GroupBox = styled.div<{ $tight?: boolean }>`
  display: flex;
  flex-direction: column;
  gap: 10px;
  padding: 0 ${(p) => (p.$tight ? 4 : 10)}px 4px 10px;
  border-right: 1px solid #b0b5b5;
`;

const GroupBody = styled.div<{ $gap?: number }>`
  display: flex;
  gap: ${(p) => p.$gap ?? 12}px;
  height: 120px;
`;

const GroupLabel = styled.div`
  display: flex;
  align-items: center;
  justify-content: center;
  height: 24px;
  white-space: nowrap;
`;

const Column = styled.div`
  display: flex;
  flex-direction: column;
  align-items: flex-start;
  margin-top: -1px;
`;

const ItemButton = styled(PlainButton)`
  gap: 6px;
  height: 40px;
  white-space: nowrap;
  &:disabled { color: #b2b5b6; }
`;

const BigButton = styled(PlainButton)`
  flex-direction: column;
  justify-content: flex-start;
  gap: 13px;
  padding-top: 6px;
  white-space: nowrap;
`;

const SelectButton = styled(PlainButton)`
  flex-direction: column;
  justify-content: flex-start;
  width: 60px;
  height: 121px;
  border: 1px solid #abadae;
  background: #dfe1e2;
`;

const SelectArt = styled.span`
  height: 59px;
  padding-top: 5px;
`;

const SelectText = styled.span`
  align-self: stretch;
  height: 40px;
  padding-top: 7px;
  border-top: 1px solid #abadae;
`;

const ToggleColumn = styled.div`
  display: flex;
  flex-direction: column;
  gap: 4px;
  padding-top: 1px;
`;

const IconToggle = styled(PlainButton)<{ $on?: boolean }>`
  position: relative;
  width: 36px;
  height: 36px;
  ${(p) => p.$on && css`
    border: 1px solid #abadae;
    background: #dfe1e2;
  `}
`;

const InnerDivider = styled.span`
  width: 2px;
  height: 107px;
  margin: 7px 0 0 2px;
  background: linear-gradient(#c3c9c9, #8e9696 50%, #c3c9c9);
`;

type ItemSpec = { icon: string; text: string; menu?: boolean; off?: boolean };

const Item = ({ icon, text, menu, off }: ItemSpec) => (
  <ItemButton disabled={off}>
    <Icon name={icon} />
    {text}
    {menu && <Caret $gap={5} />}
  </ItemButton>
);

const Items = ({ list }: { list: ItemSpec[] }) => (
  <Column>{list.map((it) => <Item key={it.icon} {...it} />)}</Column>
);

const Big = ({ icon, text }: { icon: string; text: string }) => (
  <BigButton><Icon name={icon} size={48} />{text}</BigButton>
);

const Group = ({ label, menu, tight, gap, children }: {
  label: string; menu?: boolean; tight?: boolean; gap?: number; children: ReactNode;
}) => (
  <GroupBox $tight={tight}>
    <GroupBody $gap={gap}>{children}</GroupBody>
    <GroupLabel>{label}{menu && <Caret $gap={6} />}</GroupLabel>
  </GroupBox>
);

/* ---------- navigator ---------- */

const Workspace = styled.main`
  display: flex;
  flex: 1;
  min-height: 0;
`;

const Navigator = styled.aside`
  display: flex;
  flex-direction: column;
  width: 418px;
  flex: none;
  border-right: 4px solid #dadfdf;
  background: #f8fafc;
`;

const NavTabs = styled.div`
  display: flex;
  height: 44px;
  background: #dadfdf;
`;

const NavTab = styled(PlainButton)<{ $active?: boolean }>`
  gap: 6px;
  padding: 0 12px;
  white-space: nowrap;
  background: ${(p) => (p.$active ? '#f8fafc' : 'none')};
`;

const NavHeader = styled.div`
  display: flex;
  align-items: center;
  height: 42px;
  padding: 0 13px 0 42px;
`;

const NavTitle = styled.h2`
  margin: 0 auto 0 0;
  font-size: 18px;
  line-height: 24px;
  font-weight: 700;
`;

const NavTool = styled(PlainButton)<{ $gap: number }>`
  margin-left: ${(p) => p.$gap}px;
`;

const FilterRow = styled.div`
  display: flex;
  align-items: center;
  height: 42px;
  padding: 0 14px 0 18px;
`;

const FilterField = styled.div`
  display: flex;
  align-items: center;
  width: 295px;
  height: 42px;
  margin: 0 9px 0 6px;
  padding-right: 2px;
  border: 1px solid #a3b0ae;
  background: #fff;
  input { flex: 1; min-width: 0; height: 38px; padding: 0 6px; border: 0; outline: 0; background: none; }
`;

const TreeList = styled.ul<{ $child?: boolean }>`
  margin: 0;
  padding: ${(p) => (p.$child ? '0 0 0 29px' : '7px 0 0 17px')};
  list-style: none;
`;

const TreeRow = styled.div`
  display: flex;
  align-items: center;
  gap: 7px;
  height: 32px;
`;

const InsertLine = styled.hr`
  width: calc(100% - 20px);
  height: 5px;
  margin: 7px 0 0 12px;
  border: 0;
  background:
    linear-gradient(90deg, transparent, #1f8f1f 15%, #1f8f1f 85%, transparent) 0 1px / 100% 2px no-repeat,
    linear-gradient(90deg, #eceeee, #c9efc6 15%, #c9efc6 85%, #eceeee);
`;

const Pending = styled.div`
  display: flex;
  align-items: center;
  gap: 6px;
  height: 50px;
  padding-left: 46px;
  span { display: flex; align-items: center; gap: 1px; }
`;

/* ---------- graphics area ---------- */

const Graphics = styled.section`
  position: relative;
  display: flex;
  align-items: flex-start;
  justify-content: center;
  flex: 1;
  min-width: 0;
  padding-top: 7px;
  background: #e8e9ed;
`;

const Scene = styled.svg`
  position: absolute;
  inset: 0;
  width: 100%;
  height: 100%;
`;

const ViewToolbar = styled.div`
  position: relative;
  display: flex;
  justify-content: space-between;
  width: 544px;
  padding: 4px;
  border: 1px solid #9c9fa0;
  background: #f8f9fa;
`;

const MenuCorner = styled.i`
  position: absolute;
  right: 0;
  bottom: 4px;
  width: 6px;
  height: 6px;
  background: #666;
  clip-path: polygon(100% 0, 100% 100%, 0 100%);
`;

/* ---------- status bar ---------- */

const StatusBar = styled.footer`
  position: relative;
  display: flex;
  align-items: center;
  height: 50px;
  flex: none;
  padding-left: 9px;
  border-top: 1px solid #aebcbc;
  background: #f6fafa;
`;

const StatusToggle = styled(PlainButton)<{ $on?: boolean }>`
  width: 32px;
  height: 32px;
  margin-right: 6px;
  ${(p) => p.$on && css`border: 1px solid #b3b5b6; background: #e0e1e2;`}
`;

const Message = styled.p`
  display: flex;
  align-items: center;
  gap: 2px;
  margin: 0 auto 0 5px;
  padding-bottom: 3px;
  font-size: 16px;
`;

const FindButton = styled(PlainButton)`
  width: 64px;
  height: 36px;
  margin: 0 3px;
  border: 1px solid #ced0d1;
  background: linear-gradient(90deg, #f8f8f8 42px, #dddfe0 42px);
  svg { margin: 0 16px 0 2px; }
`;

const FilterSelect = styled.div`
  display: flex;
  align-items: center;
  width: 258px;
  height: 34px;
  margin: 0 27px 0 142px;
  border: 1px solid #a9acad;
  background: #f8f8f8;
  select {
    flex: 1;
    height: 32px;
    padding: 0 0 0 10px;
    border: 0;
    border-right: 1px solid #c3c5c6;
    appearance: none;
    background: none;
    color: #333;
  }
  label { display: flex; padding: 0 6px; }
`;

const Grip = styled.svg`
  position: absolute;
  right: 3px;
  bottom: 4px;
`;

const Watermark = styled.span`
  position: absolute;
  right: 0;
  bottom: 1px;
  color: rgba(226, 228, 229, 0.85);
  font: 300 48px/72px 'Noto Sans CJK SC', sans-serif;
  text-shadow: 1px 1px 1px #8d9193, -1px -1px 1px #fff;
  white-space: nowrap;
  pointer-events: none;
`;

const viewTools: { icon: string; label: string; on?: boolean; menu?: boolean }[] = [
  { icon: 'refit', label: '重新调整' },
  { icon: 'zoomIn', label: '放大' },
  { icon: 'zoomOut', label: '缩小' },
  { icon: 'repaint', label: '重画' },
  { icon: 'display', label: '显示样式', menu: true },
  { icon: 'saved', label: '已保存方向', menu: true },
  { icon: 'viewMgr', label: '视图管理器' },
  { icon: 'datum', label: '基准显示', menu: true },
  { icon: 'sketchView', label: '草绘视图' },
  { icon: 'section', label: '截面' },
  { icon: 'perspective', label: '透视图' },
  { icon: 'annot', label: '草绘器显示', menu: true },
  { icon: 'annotDisplay', label: '注释显示', on: true },
  { icon: 'spin', label: '旋转中心', on: true },
];

const Model = () => (
  <Scene viewBox="-1010 -609 2020 1218" preserveAspectRatio="xMidYMid slice">
    <defs>
      <linearGradient id="paper" x1="0" y1="0" x2="1" y2="1"><stop offset=".3" stopColor="#fff" /><stop offset="1" stopColor="#c9d8e0" /></linearGradient>
      <linearGradient id="pane" x1="0" y1="0" x2="1" y2="1"><stop offset="0" stopColor="#d9f3fc" /><stop offset="1" stopColor="#53a9cd" /></linearGradient>
      <linearGradient id="folder" x1="0" y1="0" x2="1" y2="1"><stop offset="0" stopColor="#fff2cf" /><stop offset="1" stopColor="#e6c07c" /></linearGradient>
      <linearGradient id="funnel" x1="0" y1="0" x2="1" y2="0"><stop offset="0" stopColor="#8a8a8a" /><stop offset=".4" stopColor="#efefef" /><stop offset="1" stopColor="#808080" /></linearGradient>
      <linearGradient id="binocular" x1="0" y1="0" x2="1" y2="0"><stop offset="0" stopColor="#868686" /><stop offset=".3" stopColor="#b9b9b9" /><stop offset=".5" stopColor="#858585" /><stop offset=".7" stopColor="#b4b4b4" /><stop offset="1" stopColor="#868686" /></linearGradient>
    </defs>
    <g fill="none" shapeRendering="crispEdges" strokeWidth="1">
      <g stroke="#7c5158">
        <path d="M-21.500 -487.500 L189.500 -55.500 L22 487.500 L-189.500 55.500Z" />
        <path d="M-236 -271.500 H403 L236 271.500 H-403Z" />
        <path d="M-425 -215.500 H214 L425 215.500 H-214Z" />
      </g>
      <path d="M-297.500 -609 L297.500 609" stroke="#f26a1b" strokeDasharray="8.800 8.800" />
      <path d="M188.500 -609 L-188.500 609" stroke="#11a898" strokeDasharray="8.400 8.400" />
      <path d="M0 0 H34" stroke="#f33" />
      <path d="M0 0 L-11 -23" stroke="#3ce63c" />
      <path d="M0 0 L-9 28" stroke="#25dede" />
    </g>
    <g fill="#7c5158">
      <path d="M28 -3 L36 -2.500 L47 0 L36 2 L28 2Z" />
      <path d="M-6 -14 L-11 -16 L-15 -31 L-5 -19Z" />
      <path d="M-10 21 L-4 23 L-11 38 L-12 38Z" />
    </g>
    <circle cx="33" cy="0" r="2.500" fill="#f33" />
    <circle cx="-11" cy="-23" r="3" fill="#3cf03c" />
    <circle cx="-9" cy="28" r="2.500" fill="#25e5ee" />
    <g fontFamily="'Liberation Mono', monospace" fontSize="21">
      <text x="5" y="18" fill="#7c5158">PRT_CSYS_DEF</text>
      <text x="-32" y="-35" fill="#111">Y</text>
      <text x="50" y="-4" fill="#111">X</text>
      <text x="-29" y="59" fill="#111">Z</text>
    </g>
  </Scene>
);

export default function App() {
  return (
    <Desktop>
      <GlobalStyle />
      <Window>
        <TitleBar>
          <QuickAccess>
            <Brand><Icon name="part" />creo<sup>•</sup></Brand>
            <Rule $height={36} />
            <QuickButton $gap={10} aria-label="新建"><Icon name="newDoc" /></QuickButton>
            <QuickButton aria-label="打开"><Icon name="open" /></QuickButton>
            <QuickButton $gap={13} aria-label="保存"><Icon name="save" /></QuickButton>
            <QuickButton $gap={12} aria-label="撤消"><Icon name="undo" /><Caret $gap={10} $color={G} /></QuickButton>
            <QuickButton $gap={12} aria-label="重做"><Icon name="redo" /><Caret $gap={10} $color={G} /></QuickButton>
            <QuickButton $gap={12} aria-label="重新生成"><Icon name="regen" /></QuickButton>
            <QuickButton $gap={12} aria-label="窗口"><Icon name="windows" /><Caret $gap={12} /></QuickButton>
            <QuickButton $gap={13} aria-label="关闭窗口"><Icon name="closeWin" /></QuickButton>
            <Rule $height={36} $before={6} />
            <QuickButton $gap={6} aria-label="自定义"><Icon name="customize" /></QuickButton>
          </QuickAccess>
          <WindowTitle>PRT0001 (活动的) - Creo Parametric 6.0</WindowTitle>
          <WindowControls>
            <PlainButton aria-label="最小化"><Icon name="minimize" /></PlainButton>
            <PlainButton aria-label="最大化"><Icon name="maximize" /></PlainButton>
            <PlainButton aria-label="关闭"><Icon name="close" /></PlainButton>
          </WindowControls>
        </TitleBar>

        <TabBar>
          <Tab $kind="file">文件</Tab>
          {['模型', '分析', '注释', '工具', '视图', '柔性建模', '应用程序'].map((t) => <Tab key={t}>{t}</Tab>)}
          <Tab $kind="context">拉伸</Tab>
          <Tab $kind="active">草绘</Tab>
          <TabTools>
            <PlainButton aria-label="折叠"><Icon name="chevron" /></PlainButton>
            <PlainButton aria-label="搜索"><Icon name="search" /></PlainButton>
            <PlainButton aria-label="学习"><Icon name="learn" /><Caret $gap={11} $color="#fff" /></PlainButton>
            <PlainButton aria-label="帮助"><Icon name="help" /></PlainButton>
          </TabTools>
        </TabBar>

        <Ribbon>
          <Group label="设置" menu>
            <Items list={[
              { icon: 'sketchSetup', text: '草绘设置' },
              { icon: 'references', text: '参考' },
              { icon: 'sketchView', text: '草绘视图' },
            ]} />
          </Group>
          <Group label="获取数据"><Big icon="fileSystem" text="文件系统" /></Group>
          <Group label="操作" menu tight gap={6}>
            <Items list={[
              { icon: 'cut', text: '', off: true },
              { icon: 'copy', text: '', off: true },
              { icon: 'paste', text: '', off: true },
            ]} />
            <SelectButton>
              <SelectArt><Icon name="cursor" size={48} /></SelectArt>
              <SelectText>选择</SelectText>
              <Caret />
            </SelectButton>
          </Group>
          <Group label="基准">
            <Items list={[
              { icon: 'centerGray', text: '中心线', off: true },
              { icon: 'pointBlue', text: '点' },
              { icon: 'csysGray', text: '坐标系', off: true },
            ]} />
          </Group>
          <Group label="草绘">
            <Big icon="construct" text="构造模式" />
            <InnerDivider />
            <Items list={[
              { icon: 'line', text: '线', menu: true },
              { icon: 'rect', text: '矩形', menu: true },
              { icon: 'circle', text: '圆', menu: true },
            ]} />
            <Items list={[
              { icon: 'arc', text: '弧', menu: true },
              { icon: 'ellipse', text: '椭圆', menu: true },
              { icon: 'spline', text: '样条' },
            ]} />
            <Items list={[
              { icon: 'fillet', text: '圆角', menu: true },
              { icon: 'chamfer', text: '倒角', menu: true },
              { icon: 'text', text: '文本' },
            ]} />
            <Items list={[
              { icon: 'offset', text: '偏移' },
              { icon: 'thicken', text: '加厚' },
              { icon: 'project', text: '投影', off: true },
            ]} />
            <Items list={[
              { icon: 'center', text: '中心线', menu: true },
              { icon: 'point', text: '点' },
              { icon: 'csys', text: '坐标系' },
            ]} />
            <Big icon="palette" text="选项板" />
          </Group>
          <Group label="编辑">
            <Items list={[
              { icon: 'modify', text: '修改' },
              { icon: 'mirror', text: '镜像', off: true },
              { icon: 'split', text: '分割' },
            ]} />
            <Items list={[
              { icon: 'deleteSeg', text: '删除段' },
              { icon: 'corner', text: '拐角' },
              { icon: 'rotate', text: '旋转调整大小', off: true },
            ]} />
          </Group>
          <Group label="约束" menu>
            <Items list={[
              { icon: 'vertical', text: '竖直' },
              { icon: 'horizontal', text: '水平' },
              { icon: 'perpendicular', text: '垂直' },
            ]} />
            <Items list={[
              { icon: 'tangent', text: '相切' },
              { icon: 'midpoint', text: '中点' },
              { icon: 'coincident', text: '重合' },
            ]} />
            <Items list={[
              { icon: 'symmetric', text: '对称' },
              { icon: 'equal', text: '相等' },
              { icon: 'parallel', text: '平行' },
            ]} />
          </Group>
          <Group label="尺寸" menu>
            <Big icon="dimension" text="尺寸" />
            <Items list={[
              { icon: 'perimeter', text: '周长' },
              { icon: 'baseline', text: '基线' },
              { icon: 'refDim', text: '参考' },
            ]} />
          </Group>
          <Group label="检查" menu tight gap={6}>
            <Big icon="feature" text="特征要求" />
            <ToggleColumn>
              <IconToggle aria-label="着色封闭环"><Icon name="shade" /></IconToggle>
              <IconToggle $on aria-label="突出显示开放端"><Icon name="openEnds" /></IconToggle>
              <IconToggle $on aria-label="重叠几何"><Icon name="overlap" /></IconToggle>
            </ToggleColumn>
          </Group>
          <Group label="关闭">
            <Big icon="ok" text="确定" />
            <Big icon="cancel" text="取消" />
          </Group>
        </Ribbon>

        <Workspace>
          <Navigator>
            <NavTabs>
              <NavTab $active><Icon name="tree" size={28} />模型树</NavTab>
              <NavTab><Icon name="folders" size={28} />文件夹浏览器</NavTab>
              <NavTab><Icon name="favorites" size={28} />收藏夹</NavTab>
            </NavTabs>
            <NavHeader>
              <NavTitle>模型树</NavTitle>
              <NavTool $gap={0} aria-label="工具"><Icon name="tools" /><Caret $gap={14} /></NavTool>
              <NavTool $gap={13} aria-label="设置"><Icon name="settings" size={28} /><Caret $gap={11} /></NavTool>
              <NavTool $gap={19} aria-label="显示"><Icon name="hideTree" size={30} /></NavTool>
            </NavHeader>
            <FilterRow>
              <label htmlFor="tree-filter" aria-label="过滤"><Icon name="filter" /></label>
              <FilterField>
                <input id="tree-filter" type="text" />
                <PlainButton aria-label="清除"><Icon name="clear" /></PlainButton>
              </FilterField>
              <Caret />
              <NavTool $gap={14} aria-label="添加"><Icon name="plus" /></NavTool>
            </FilterRow>
            <TreeList>
              <li>
                <TreeRow><Icon name="part" />PRT0001.PRT</TreeRow>
                <TreeList $child>
                  {['RIGHT', 'TOP', 'FRONT'].map((t) => (
                    <li key={t}><TreeRow><Icon name="plane" />{t}</TreeRow></li>
                  ))}
                  <li><TreeRow><Icon name="csysTree" />PRT_CSYS_DEF</TreeRow></li>
                </TreeList>
              </li>
            </TreeList>
            <InsertLine />
            <Pending><Icon name="extrude" /><span><Icon name="spark" size={12} />拉伸 1</span></Pending>
          </Navigator>
          <Graphics>
            <Model />
            <ViewToolbar>
              {viewTools.map((t) => (
                <IconToggle key={t.icon} $on={t.on} aria-label={t.label}>
                  <Icon name={t.icon} />
                  {t.menu && <MenuCorner />}
                </IconToggle>
              ))}
            </ViewToolbar>
          </Graphics>
        </Workspace>

        <StatusBar>
          <StatusToggle $on aria-label="导航器"><Icon name="tree" /></StatusToggle>
          <StatusToggle aria-label="浏览器"><Icon name="globe" /></StatusToggle>
          <StatusToggle aria-label="全屏"><Icon name="blank" /></StatusToggle>
          <Rule $height={32} $before={7} />
          <Message><Icon name="arrowMsg" size={18} />选择一个平面或平面曲面作为草绘平面，或者选择草绘。</Message>
          <Rule $height={38} />
          <Rule $height={38} $before={60} />
          <FindButton aria-label="查找"><Icon name="find" /><Caret $color={G} /></FindButton>
          <Rule $height={38} />
          <FilterSelect>
            <select id="pick-filter"><option>所有草绘</option></select>
            <label htmlFor="pick-filter" aria-label="选择过滤器"><Caret /></label>
          </FilterSelect>
          <Grip width="18" height="18" viewBox="0 0 18 18"><path d="M1 17 L17 1 M7 17 L17 7 M13 17 L17 13" stroke="#b3b7b8" strokeWidth="1.500" /></Grip>
          <Watermark>CSDN @晚睡早起学</Watermark>
        </StatusBar>
      </Window>
    </Desktop>
  );
}
